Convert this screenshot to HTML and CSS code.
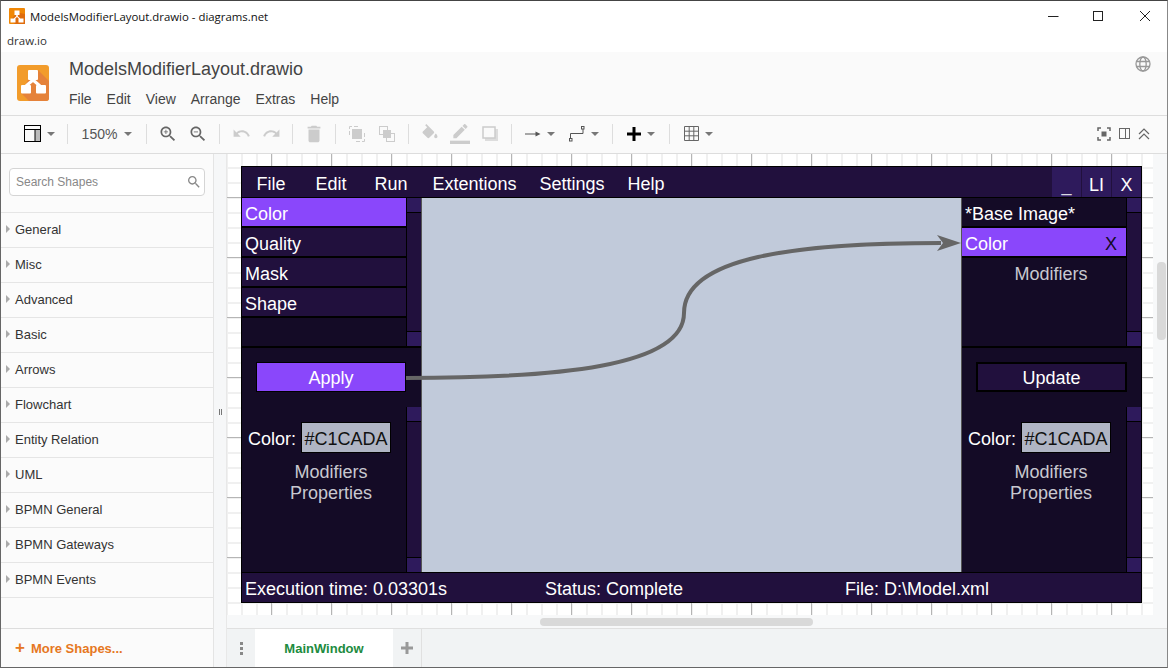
FILE: index.html
```html
<!DOCTYPE html>
<html lang="en">
<head>
  <meta charset="UTF-8">
  <title>ModelsModifierLayout.drawio - diagrams.net</title>
  <link rel="stylesheet" href="styles.css">
</head>
<body>
  <div class="app">
    <div class="titlebar">
      <svg class="title-icon" width="16" height="16" viewBox="0 0 32 32">
        <rect width="32" height="32" rx="2" fill="#f08705"/>
        <path d="M32 12v20H12L4 24l7-9 5-5h6z" fill="#df6c0c"/>
        <path d="M11 5h10v9h-3.500v2.500l5 4.500H29v8H19v-8h.5L16 18l-3.500 3h.5v8H3v-8h6.500l5-4.500V14H11z" fill="#fff"/>
      </svg>
      <span class="title-text">ModelsModifierLayout.drawio - diagrams.net</span>
      <div class="win-controls">
        <svg width="46" height="30" viewBox="0 0 46 30"><path d="M18 15.500h10.500" stroke="#222" stroke-width="1"/></svg>
        <svg width="46" height="30" viewBox="0 0 46 30"><rect x="17.500" y="10.500" width="9" height="9" fill="none" stroke="#222"/></svg>
        <svg width="46" height="30" viewBox="0 0 46 30"><path d="M18 10l10 10M28 10L18 20" stroke="#222" stroke-width="1"/></svg>
      </div>
    </div>
    <div class="domainbar">draw.io</div>

    <div class="header">
      <svg class="logo" width="32" height="36" viewBox="0 0 32 36">
        <rect width="32" height="36" rx="3" fill="#f29c2b"/>
        <path d="M32 16v17a3 3 0 0 1-3 3H12L4 28l7-13 10-10z" fill="#e5823a"/>
        <path d="M16 15L9 21M16 15l7 6" stroke="#fff" stroke-width="3" fill="none"/>
        <rect x="11" y="5" width="10" height="10" rx="1" fill="#fff"/>
        <rect x="4" y="20" width="10" height="8.500" rx="1" fill="#fff"/>
        <rect x="19" y="20" width="10" height="8.500" rx="1" fill="#fff"/>
      </svg>
      <div class="header-main">
        <div class="doc-name">ModelsModifierLayout.drawio</div>
        <div class="menu">
          <span>File</span><span>Edit</span><span>View</span><span>Arrange</span><span>Extras</span><span>Help</span>
        </div>
      </div>
      <svg class="globe" width="16" height="16" viewBox="0 0 16 16" fill="none" stroke="#999" stroke-width="1.300">
        <circle cx="8" cy="8" r="7"/>
        <ellipse cx="8" cy="8" rx="3.200" ry="7"/>
        <path d="M1 5.500h14M1 10.500h14"/>
      </svg>
    </div>

    <div class="toolbar">
      <div class="tb-wide">
        <svg width="17" height="17" viewBox="0 0 17 17"><rect x="11" y="4" width="5" height="12" fill="#bbb"/><rect x=".5" y=".5" width="16" height="16" fill="none" stroke="#000"/><path d="M.5 4.500h16M11 4.500v12" stroke="#000" fill="none"/></svg>
        <i class="caret"></i>
      </div>
      <i class="sep"></i>
      <div class="tb-zoom"><span>150%</span><i class="caret"></i></div>
      <i class="sep"></i>
      <div class="tb-btn"><svg width="20" height="20" viewBox="0 0 24 24" fill="#666"><path d="M15.500 14h-.79l-.28-.27C15.410 12.590 16 11.110 16 9.500 16 5.910 13.090 3 9.500 3S3 5.910 3 9.500 5.910 16 9.500 16c1.610 0 3.090-.59 4.230-1.570l.27.28v.79l5 4.990L20.490 19l-4.990-5zm-6 0C7.010 14 5 11.990 5 9.500S7.010 5 9.500 5 14 7.010 14 9.500 11.990 14 9.500 14z"/><path d="M12 10h-2v2H9v-2H7V9h2V7h1v2h2v1z"/></svg></div>
      <div class="tb-btn"><svg width="20" height="20" viewBox="0 0 24 24" fill="#666"><path d="M15.500 14h-.79l-.28-.27C15.410 12.590 16 11.110 16 9.500 16 5.910 13.090 3 9.500 3S3 5.910 3 9.500 5.910 16 9.500 16c1.610 0 3.090-.59 4.230-1.570l.27.28v.79l5 4.990L20.490 19l-4.990-5zm-6 0C7.010 14 5 11.990 5 9.500S7.010 5 9.500 5 14 7.010 14 9.500 11.990 14 9.500 14z"/><path d="M7 9h5v1H7z"/></svg></div>
      <i class="sep"></i>
      <div class="tb-btn"><svg width="19" height="19" viewBox="0 0 24 24" fill="#ccc"><path d="M12.500 8c-2.650 0-5.050.99-6.900 2.600L2 7v9h9l-3.620-3.620c1.390-1.160 3.160-1.880 5.120-1.880 3.540 0 6.550 2.310 7.600 5.500l2.370-.78C21.080 11.030 17.150 8 12.500 8z"/></svg></div>
      <div class="tb-btn"><svg width="19" height="19" viewBox="0 0 24 24" fill="#ccc"><path d="M18.400 10.600C16.550 8.990 14.150 8 11.500 8c-4.650 0-8.580 3.030-9.960 7.220L3.900 16c1.050-3.190 4.050-5.500 7.600-5.500 1.950 0 3.730.72 5.120 1.880L13 16h9V7l-3.600 3.600z"/></svg></div>
      <i class="sep"></i>
      <div class="tb-btn"><svg width="22" height="22" viewBox="0 0 24 24" fill="#ccc"><path d="M6 19c0 1.100.9 2 2 2h8c1.100 0 2-.9 2-2V7H6v12zM19 4h-3.500l-1-1h-5l-1 1H5v2h14V4z"/></svg></div>
      <i class="sep"></i>
      <div class="tb-btn"><svg width="16" height="16" viewBox="0 0 16 16"><path d="M3 .5H.5V3M.5 5v4M5 .5h4M15.500 13v2.500H13M11 15.500H7M15.500 11V7" stroke="#ccc" fill="none"/><rect x="3" y="3" width="10" height="10" fill="#ccc"/></svg></div>
      <div class="tb-btn"><svg width="16" height="16" viewBox="0 0 16 16"><rect x=".5" y=".5" width="8" height="8" fill="none" stroke="#ccc"/><rect x="7.500" y="7.500" width="8" height="8" fill="none" stroke="#ccc"/><rect x="4" y="4" width="8" height="8" fill="#ccc"/></svg></div>
      <i class="sep"></i>
      <div class="tb-btn"><svg width="20" height="20" viewBox="0 0 24 24" fill="#ccc"><path d="M16.560 8.940L7.620 0 6.210 1.410l2.380 2.380-5.150 5.150c-.59.59-.59 1.540 0 2.120l5.500 5.500c.29.29.68.44 1.060.44s.77-.15 1.060-.44l5.500-5.500c.59-.58.59-1.530 0-2.120zM19 11.500s-2 2.170-2 3.500c0 1.100.9 2 2 2s2-.9 2-2c0-1.330-2-3.500-2-3.500z"/></svg></div>
      <div class="tb-btn"><svg width="22" height="20" viewBox="0 0 24 24" fill="#ccc"><path d="M17.750 7L14 3.250l-10 10V17h3.750l10-10zm2.960-2.960c.39-.39.39-1.020 0-1.410L18.370.29c-.39-.39-1.020-.39-1.410 0L15 2.250 18.750 6l1.960-1.960z"/><rect y="20" width="24" height="4"/></svg></div>
      <div class="tb-btn"><svg width="16" height="16" viewBox="0 0 16 16"><rect x="3" y="3" width="13" height="12" fill="#ddd"/><rect x="1" y="1" width="12" height="11" fill="#fafafa" stroke="#ccc" stroke-width="1.500"/></svg></div>
      <i class="sep"></i>
      <div class="tb-wide">
        <svg width="16" height="10" viewBox="0 0 16 10"><path d="M0 5h12" stroke="#555" fill="none"/><path d="M10.500 2.500L15.500 5l-5 2.500z" fill="#555"/></svg>
        <i class="caret"></i>
      </div>
      <div class="tb-wide">
        <svg width="16" height="16" viewBox="0 0 16 16" fill="none" stroke="#555"><rect x=".5" y="12.500" width="2.500" height="2.500"/><rect x="12.500" y=".5" width="2.500" height="2.500"/><path d="M1.500 12.500V7.500H14V3"/></svg>
        <i class="caret"></i>
      </div>
      <i class="sep"></i>
      <div class="tb-wide">
        <svg width="14" height="14" viewBox="0 0 14 14"><path d="M5.500 0h3v5.500H14v3H8.500V14h-3V8.500H0v-3h5.500z" fill="#000"/></svg>
        <i class="caret"></i>
      </div>
      <i class="sep"></i>
      <div class="tb-wide">
        <svg width="15" height="15" viewBox="0 0 15 15" fill="none" stroke="#666"><path d="M.5.500h14v14H.5zM.5 5.200h14M.5 9.800h14M5.200.5v14M9.800.5v14"/></svg>
        <i class="caret"></i>
      </div>
      <div class="tb-right">
        <svg width="14" height="14" viewBox="0 0 14 14" fill="none" stroke="#666" stroke-width="1.500"><path d="M1 4V1h3M10 1h3v3M13 10v3h-3M4 13H1v-3"/><rect x="4.500" y="4.500" width="5" height="5" fill="#666" stroke="none"/></svg>
        <svg width="11" height="11" viewBox="0 0 11 11" fill="none" stroke="#666"><rect x=".5" y=".5" width="10" height="10"/><path d="M6.500 .5v10"/></svg>
        <svg width="12" height="12" viewBox="0 0 12 12" fill="none" stroke="#666" stroke-width="1.200"><path d="M1 6l5-5 5 5M1 11l5-5 5 5"/></svg>
      </div>
    </div>

    <div class="workspace">
      <div class="sidebar">
        <div class="search-wrap">
          <div class="search-box">
            <span>Search Shapes</span>
            <svg width="16" height="16" viewBox="0 0 24 24" fill="#888"><path d="M15.500 14h-.79l-.28-.27C15.410 12.590 16 11.110 16 9.500 16 5.910 13.090 3 9.500 3S3 5.910 3 9.500 5.910 16 9.500 16c1.610 0 3.090-.59 4.230-1.570l.27.28v.79l5 4.990L20.490 19l-4.990-5zm-6 0C7.010 14 5 11.990 5 9.500S7.010 5 9.500 5 14 7.010 14 9.500 11.990 14 9.500 14z"/></svg>
          </div>
        </div>
        <div class="shape-list">
          <div class="shape-row">General</div>
          <div class="shape-row">Misc</div>
          <div class="shape-row">Advanced</div>
          <div class="shape-row">Basic</div>
          <div class="shape-row">Arrows</div>
          <div class="shape-row">Flowchart</div>
          <div class="shape-row">Entity Relation</div>
          <div class="shape-row">UML</div>
          <div class="shape-row">BPMN General</div>
          <div class="shape-row">BPMN Gateways</div>
          <div class="shape-row">BPMN Events</div>
        </div>
        <div class="more-shapes"><b class="more-plus">+</b> More Shapes...</div>
      </div>

      <div class="splitter"><i></i><i></i></div>

      <div class="editor">
        <div class="canvas-row">
          <div class="canvas">
            <div class="mock">
              <div class="mock-menu">
                <span>File</span><span>Edit</span><span>Run</span><span>Extentions</span><span>Settings</span><span>Help</span>
                <div class="mock-controls">
                  <div class="mock-ctl muted">_</div><div class="mock-ctl">LI</div><div class="mock-ctl">X</div>
                </div>
              </div>
              <div class="mock-body">
                <div class="panel">
                  <div class="panel-top">
                    <div class="list">
                      <div class="item active">Color</div>
                      <div class="item">Quality</div>
                      <div class="item">Mask</div>
                      <div class="item">Shape</div>
                    </div>
                    <div class="scroller"><i></i><b></b><i></i></div>
                  </div>
                  <div class="action-row"><div class="action primary">Apply</div></div>
                  <div class="panel-bottom">
                    <div class="props">
                      <div class="color-row"><span>Color:</span><div class="swatch">#C1CADA</div></div>
                      <div class="hint">Modifiers<br>Properties</div>
                    </div>
                    <div class="scroller"><i></i><b></b><i></i></div>
                  </div>
                </div>

                <div class="viewport"></div>

                <div class="panel">
                  <div class="panel-top">
                    <div class="list">
                      <div class="item plain">*Base Image*</div>
                      <div class="item active split"><span>Color</span><span class="remove">X</span></div>
                      <div class="hint hint-top">Modifiers</div>
                    </div>
                    <div class="scroller"><i></i><b></b><i></i></div>
                  </div>
                  <div class="action-row"><div class="action wide">Update</div></div>
                  <div class="panel-bottom">
                    <div class="props">
                      <div class="color-row"><span>Color:</span><div class="swatch">#C1CADA</div></div>
                      <div class="hint">Modifiers<br>Properties</div>
                    </div>
                    <div class="scroller"><i></i><b></b><i></i></div>
                  </div>
                </div>
              </div>
              <div class="mock-status">
                <span>Execution time: 0.03301s</span><span>Status: Complete</span><span>File: D:\Model.xml</span>
              </div>
            </div>
            <svg class="connector" width="580" height="160" viewBox="0 0 580 160">
              <path d="M0 141C150 141 278 130 278 76 C278 20 390 6 535 6" fill="none" stroke="#666" stroke-width="4"/>
              <path d="M555 6L531 -2 L537 6 L531 14z" fill="#666"/>
            </svg>
          </div>
          <div class="v-scroll"><i></i></div>
        </div>
        <div class="h-scroll"><i></i></div>
        <div class="tabs">
          <div class="tab-dots"><i></i><i></i><i></i></div>
          <div class="tab">MainWindow</div>
          <div class="tab-add">
            <svg width="14" height="14" viewBox="0 0 14 14"><path d="M5.500 1h3v4.500H13v3H8.500V13h-3V8.500H1v-3h4.500z" fill="#999"/></svg>
          </div>
        </div>
      </div>
    </div>
  </div>
</body>
</html>
```

FILE: styles.css
```css
* {
  padding: 0;
  margin: 0;
  box-sizing: border-box;
}

html,
body {
  width: 1168px;
  height: 668px;
  overflow: hidden;
}

body {
  font-family: "Liberation Sans", Arial, sans-serif;
  background-color: #fff;
}

.app {
  width: 1168px;
  height: 668px;
  display: flex;
  flex-direction: column;
  border-top: 1px solid #444;
  border-left: 1px solid #666;
  border-bottom: 1px solid #666;
  border-right: 1px solid #888;
}

/* browser window chrome */
.titlebar {
  height: 30px;
  display: flex;
  align-items: center;
  padding-left: 8px;
  background-color: #fff;
  color: #111;
  font-family: "Open Sans", sans-serif;
  font-size: 11.400px;
}

.title-text {
  margin-left: 5px;
}

.win-controls {
  margin-left: auto;
  margin-right: -1px;
  display: flex;
}

.domainbar {
  height: 21px;
  padding: 2px 0 0 6px;
  font-family: "Open Sans", sans-serif;
  font-size: 11.500px;
  color: #333;
}

/* drawio header */
.header {
  height: 64px;
  display: flex;
  background-color: #fafafa;
  border-bottom: 1px solid #ddd;
  padding-right: 16px;
}

.logo {
  margin: 13px 0 0 16px;
}

.header-main {
  margin-left: 20px;
  flex: 1;
}

.doc-name {
  font-size: 18px;
  color: #444;
  padding-top: 7px;
  height: 34px;
}

.menu {
  display: flex;
  gap: 15px;
  font-size: 14px;
  color: #444;
  padding-top: 5px;
}

.globe {
  margin-top: 4px;
}

.toolbar {
  height: 38px;
  display: flex;
  align-items: center;
  padding: 0 0 2px 16px;
  background-color: #fafafa;
  border-bottom: 1px solid #ddd;
}

.sep {
  width: 1px;
  height: 20px;
  margin: 0 6px;
  background-color: #ddd;
}

.tb-btn,
.tb-wide,
.tb-zoom {
  display: flex;
  align-items: center;
  justify-content: center;
  gap: 6px;
}

.tb-btn {
  width: 30px;
}

.tb-wide {
  width: 44px;
}

.tb-zoom {
  width: 66px;
  gap: 7px;
  font-size: 14px;
  color: #555;
}

.caret {
  width: 0;
  height: 0;
  border-left: 4px solid transparent;
  border-right: 4px solid transparent;
  border-top: 4px solid #777;
}

.tb-right {
  margin-left: auto;
  display: flex;
  align-items: center;
  gap: 8px;
  padding-right: 17px;
}

.workspace {
  flex: 1;
  display: flex;
  min-height: 0;
}

/* shapes sidebar */
.sidebar {
  width: 213px;
  display: flex;
  flex-direction: column;
  background-color: #fbfbfb;
  border-right: 1px solid #e4e4e4;
}

.search-wrap {
  height: 59px;
  padding: 14px 8px 0 8px;
  border-bottom: 1px solid #e5e5e5;
}

.search-box {
  height: 28px;
  display: flex;
  align-items: center;
  justify-content: space-between;
  padding: 0 2px 0 6px;
  background-color: #fff;
  border: 1px solid #d5d5d5;
  border-radius: 4px;
  font-size: 12px;
  color: #888;
}

.shape-list {
  flex: 1;
}

.shape-row {
  height: 35px;
  position: relative;
  display: flex;
  align-items: center;
  padding: 0 0 2px 14px;
  font-size: 13px;
  color: #333;
  border-bottom: 1px solid #e5e5e5;
}

.shape-row::before {
  content: "";
  position: absolute;
  left: 5px;
  top: 12px;
  border-left: 4px solid #aaa;
  border-top: 4px solid transparent;
  border-bottom: 4px solid transparent;
}

.more-shapes {
  height: 39px;
  display: flex;
  align-items: center;
  padding-left: 14px;
  gap: 6px;
  border-top: 1px solid #ddd;
  font-size: 13px;
  font-weight: bold;
  color: #e67722;
}

.more-plus {
  font-size: 17px;
  line-height: 12px;
}

.splitter {
  width: 13px;
  background-color: #f6f7f8;
  border-right: 1px solid #e8e8e8;
  display: flex;
  align-items: center;
  justify-content: center;
  gap: 1px;
  padding-top: 2px;
}

.splitter i {
  width: 1px;
  height: 6px;
  background-color: #777;
}

/* editor area */
.editor {
  flex: 1;
  display: flex;
  flex-direction: column;
  min-width: 0;
}

.canvas-row {
  height: 461px;
  display: flex;
}

.canvas {
  position: relative;
  width: 926px;
  padding: 12px 0 0 14px;
  background-color: #fff;
  background-image:
    linear-gradient(#b5b5b5 1px, transparent 1px),
    linear-gradient(90deg, #b5b5b5 1px, transparent 1px),
    linear-gradient(#f0f0f0 2px, transparent 2px),
    linear-gradient(90deg, #f0f0f0 2px, transparent 2px);
  background-size: 60px 60px, 60px 60px, 15px 15px, 15px 15px;
  background-position: 0 43px, 44px 0, 0 -2px, -1px 0;
}

.v-scroll {
  flex: 1;
  background-color: #f7f8f9;
  position: relative;
}

.v-scroll i {
  position: absolute;
  right: 1px;
  top: 108px;
  width: 9px;
  height: 78px;
  border-radius: 4px;
  background-color: #d9d9d9;
}

.h-scroll {
  height: 13px;
  background-color: #f7f8f9;
  position: relative;
}

.h-scroll i {
  position: absolute;
  left: 313px;
  top: 3px;
  width: 273px;
  height: 8px;
  border-radius: 4px;
  background-color: #d9d9d9;
}

.tabs {
  flex: 1;
  display: flex;
  background-color: #f1f3f4;
  border-top: 1px solid #e0e0e0;
}

.tab-dots {
  width: 28px;
  display: flex;
  flex-direction: column;
  align-items: center;
  justify-content: center;
  gap: 2px;
}

.tab-dots i {
  width: 3px;
  height: 3px;
  background-color: #888;
}

.tab {
  width: 138px;
  display: flex;
  align-items: center;
  justify-content: center;
  background-color: #fff;
  color: #218b3e;
  font-size: 13px;
  font-weight: bold;
}

.tab-add {
  width: 29px;
  display: flex;
  align-items: center;
  justify-content: center;
  border-right: 1px solid #e0e0e0;
}

/* the window drawn on the canvas */
.mock {
  width: 901px;
  height: 437px;
  display: flex;
  flex-direction: column;
  background-color: #000;
  border: 1px solid #000;
  font-size: 18px;
  color: #fff;
}

.mock-menu {
  height: 31px;
  display: flex;
  align-items: center;
  background-color: #21103d;
  border-bottom: 1px solid #000;
}

.mock-menu > span {
  min-width: 60px;
  padding: 6px 11.500px 0;
  text-align: center;
}

.mock-menu > span:first-child {
  margin-left: -1px;
}

.mock-controls {
  margin-left: auto;
  height: 100%;
  display: flex;
  gap: 1px;
}

.mock-ctl {
  width: 29px;
  display: flex;
  align-items: center;
  justify-content: center;
  padding-top: 7px;
  background-color: #2e1a5c;
}

.mock-ctl.muted {
  color: #d8d8e0;
}

.mock-body {
  height: 375px;
  display: flex;
}

.panel {
  width: 179px;
  display: flex;
  flex-direction: column;
  background-color: #140b26;
}

.panel-top {
  height: 150px;
  display: flex;
  border-bottom: 2px solid #000;
}

.list {
  flex: 1;
  min-width: 0;
}

.item {
  height: 30px;
  display: flex;
  align-items: center;
  padding: 6px 0 0 3px;
  background-color: #21103d;
  border-bottom: 2px solid #000;
}

.item.active {
  background-color: #8a47fb;
}

.item.plain {
  background-color: #140b26;
}

.item.split {
  justify-content: space-between;
  padding-right: 9px;
}

.remove {
  color: #140b26;
}

.scroller {
  width: 15px;
  display: flex;
  flex-direction: column;
  border-left: 1px solid #000;
  background-color: #000;
}

.scroller i {
  height: 14px;
  background-color: #2e1a5c;
}

.scroller b {
  flex: 1;
  margin: 1px 0;
  background-color: #21103d;
}

.action-row {
  height: 59px;
  padding: 14px 0 0 14px;
}

.action {
  width: 150px;
  height: 30px;
  display: flex;
  align-items: center;
  justify-content: center;
  padding-top: 4px;
  background-color: #21103d;
  border: 2px solid #000;
}

.action.wide {
  width: 151px;
}

.action.primary {
  background-color: #8a47fb;
  border: 1px solid #000;
}

.panel-bottom {
  flex: 1;
  display: flex;
  min-height: 0;
}

.props {
  flex: 1;
  min-width: 0;
}

.color-row {
  display: flex;
  align-items: center;
  gap: 5px;
  padding: 15px 0 0 6px;
}

.color-row span {
  padding-top: 5px;
}

.swatch {
  width: 90px;
  height: 31px;
  display: flex;
  align-items: center;
  justify-content: center;
  padding-top: 5px;
  background-color: #b0b5c4;
  border: 1px solid #000;
  color: #111;
}

.hint {
  margin-top: 9px;
  padding-left: 14px;
  text-align: center;
  line-height: 21px;
  color: #c8c8d0;
}

.hint-top {
  margin-top: 6px;
}

.viewport {
  flex: 1;
  background-color: #c1cada;
  border-left: 1px solid #555;
  border-right: 1px solid #555;
}

.mock-status {
  height: 30px;
  display: grid;
  grid-template-columns: 300px 300px 1fr;
  align-items: center;
  padding: 4px 0 0 3px;
  background-color: #21103d;
  border-top: 1px solid #000;
}

.connector {
  position: absolute;
  left: 179px;
  top: 83px;
  overflow: visible;
}
```
